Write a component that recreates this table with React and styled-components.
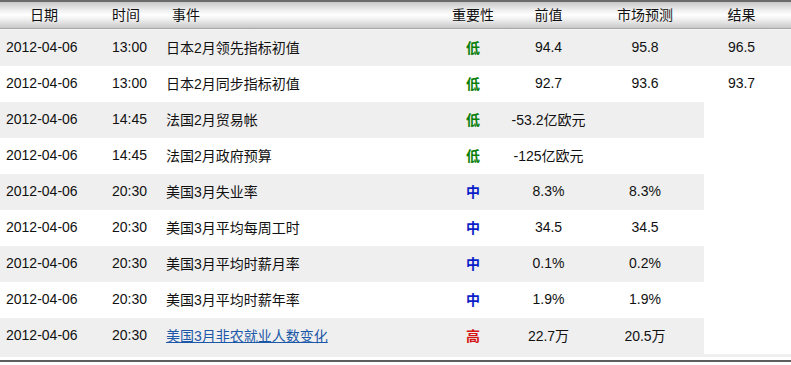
import React from "react";
import styled, { createGlobalStyle } from "styled-components";

const rows = [
  { date: "2012-04-06", time: "13:00", event: "日本2月领先指标初值", level: "低", prev: "94.4", forecast: "95.8", result: "96.5" },
  { date: "2012-04-06", time: "13:00", event: "日本2月同步指标初值", level: "低", prev: "92.7", forecast: "93.6", result: "93.7" },
  { date: "2012-04-06", time: "14:45", event: "法国2月贸易帐", level: "低", prev: "-53.2亿欧元", forecast: "" },
  { date: "2012-04-06", time: "14:45", event: "法国2月政府预算", level: "低", prev: "-125亿欧元", forecast: "" },
  { date: "2012-04-06", time: "20:30", event: "美国3月失业率", level: "中", prev: "8.3%", forecast: "8.3%" },
  { date: "2012-04-06", time: "20:30", event: "美国3月平均每周工时", level: "中", prev: "34.5", forecast: "34.5" },
  { date: "2012-04-06", time: "20:30", event: "美国3月平均时薪月率", level: "中", prev: "0.1%", forecast: "0.2%" },
  { date: "2012-04-06", time: "20:30", event: "美国3月平均时薪年率", level: "中", prev: "1.9%", forecast: "1.9%" },
  { date: "2012-04-06", time: "20:30", event: "美国3月非农就业人数变化", level: "高", prev: "22.7万", forecast: "20.5万", link: true },
];

const levelColors = { 低: "#0a7f0a", 中: "#0a1ec8", 高: "#d41414" };

function App() {
  return (
    <>
      <GlobalStyle />
      <Table>
        <Header>
          <HeadCell $pad="30px">日期</HeadCell>
          <HeadCell $pad="12px">时间</HeadCell>
          <HeadCell $pad="12px">事件</HeadCell>
          <HeadCell $center>重要性</HeadCell>
          <HeadCell $center>前值</HeadCell>
          <HeadCell $center>市场预测</HeadCell>
          <HeadCell $center $right="12px">结果</HeadCell>
        </Header>
        <Body>
          {rows.map((r, i) => (
            <Row key={i} $gray={i % 2 === 0} $short={!r.result}>
              <Cell $pad="6px">{r.date}</Cell>
              <Cell $pad="12px">{r.time}</Cell>
              <Cell $pad="6px">{r.link ? <EventLink href="#">{r.event}</EventLink> : r.event}</Cell>
              <Cell $center>
                <Level $color={levelColors[r.level]}>{r.level}</Level>
              </Cell>
              <Cell $center>{r.prev}</Cell>
              <Cell $center>{r.forecast}</Cell>
              {r.result && (
                <Cell $center $right="12px">
                  {r.result}
                </Cell>
              )}
            </Row>
          ))}
        </Body>
        <BottomStrip />
        <BottomLine />
      </Table>
    </>
  );
}

export default App;

const GlobalStyle = createGlobalStyle`
  body {
    margin: 0;
    background: #ffffff;
    font-family: "Liberation Sans", "Noto Sans CJK SC", sans-serif;
    font-size: 14px;
    color: #111;
  }
`;

const columns = "100px 60px 275px 76px 75px 118px 87px";

const Table = styled.div`
  width: 791px;
  display: flex;
  flex-direction: column;
`;

const Header = styled.div`
  display: grid;
  grid-template-columns: ${columns};
  height: 29px;
  box-sizing: border-box;
  border-top: 2px solid #6a6a6a;
  border-bottom: 1px solid #a8a8a8;
  background: linear-gradient(to bottom, #c8c8c8 0%, #f2f2f2 35%, #ffffff 50%, #ececec 70%, #c8c8c8 100%);
`;

const HeadCell = styled.div`
  display: flex;
  align-items: center;
  justify-content: ${(p) => (p.$center ? "center" : "flex-start")};
  padding-left: ${(p) => p.$pad || "0"};
  padding-right: ${(p) => p.$right || "0"};
  padding-bottom: 3px;
  color: #111;
`;

const Body = styled.div`
  display: flex;
  flex-direction: column;
  border-top: 1px solid #f4f4f4;
  background: #ffffff;
`;

const Row = styled.div`
  display: grid;
  grid-template-columns: ${columns};
  height: 36px;
  width: ${(p) => (p.$short ? "704px" : "791px")};
  background: ${(p) => (p.$gray ? "#efefef" : "#ffffff")};
`;

const Cell = styled.div`
  display: flex;
  align-items: center;
  justify-content: ${(p) => (p.$center ? "center" : "flex-start")};
  padding-left: ${(p) => p.$pad || "0"};
  padding-right: ${(p) => p.$right || "0"};
  padding-bottom: 2px;
  white-space: nowrap;
`;

const Level = styled.span`
  color: ${(p) => p.$color};
  font-weight: bold;
`;

const EventLink = styled.a`
  color: #1c58a8;
  text-decoration: underline;
`;

const BottomStrip = styled.div`
  height: 3px;
  background: #efefef;
`;

const BottomLine = styled.div`
  height: 2px;
  margin-top: 3px;
  background: #5e5e5e;
`;
